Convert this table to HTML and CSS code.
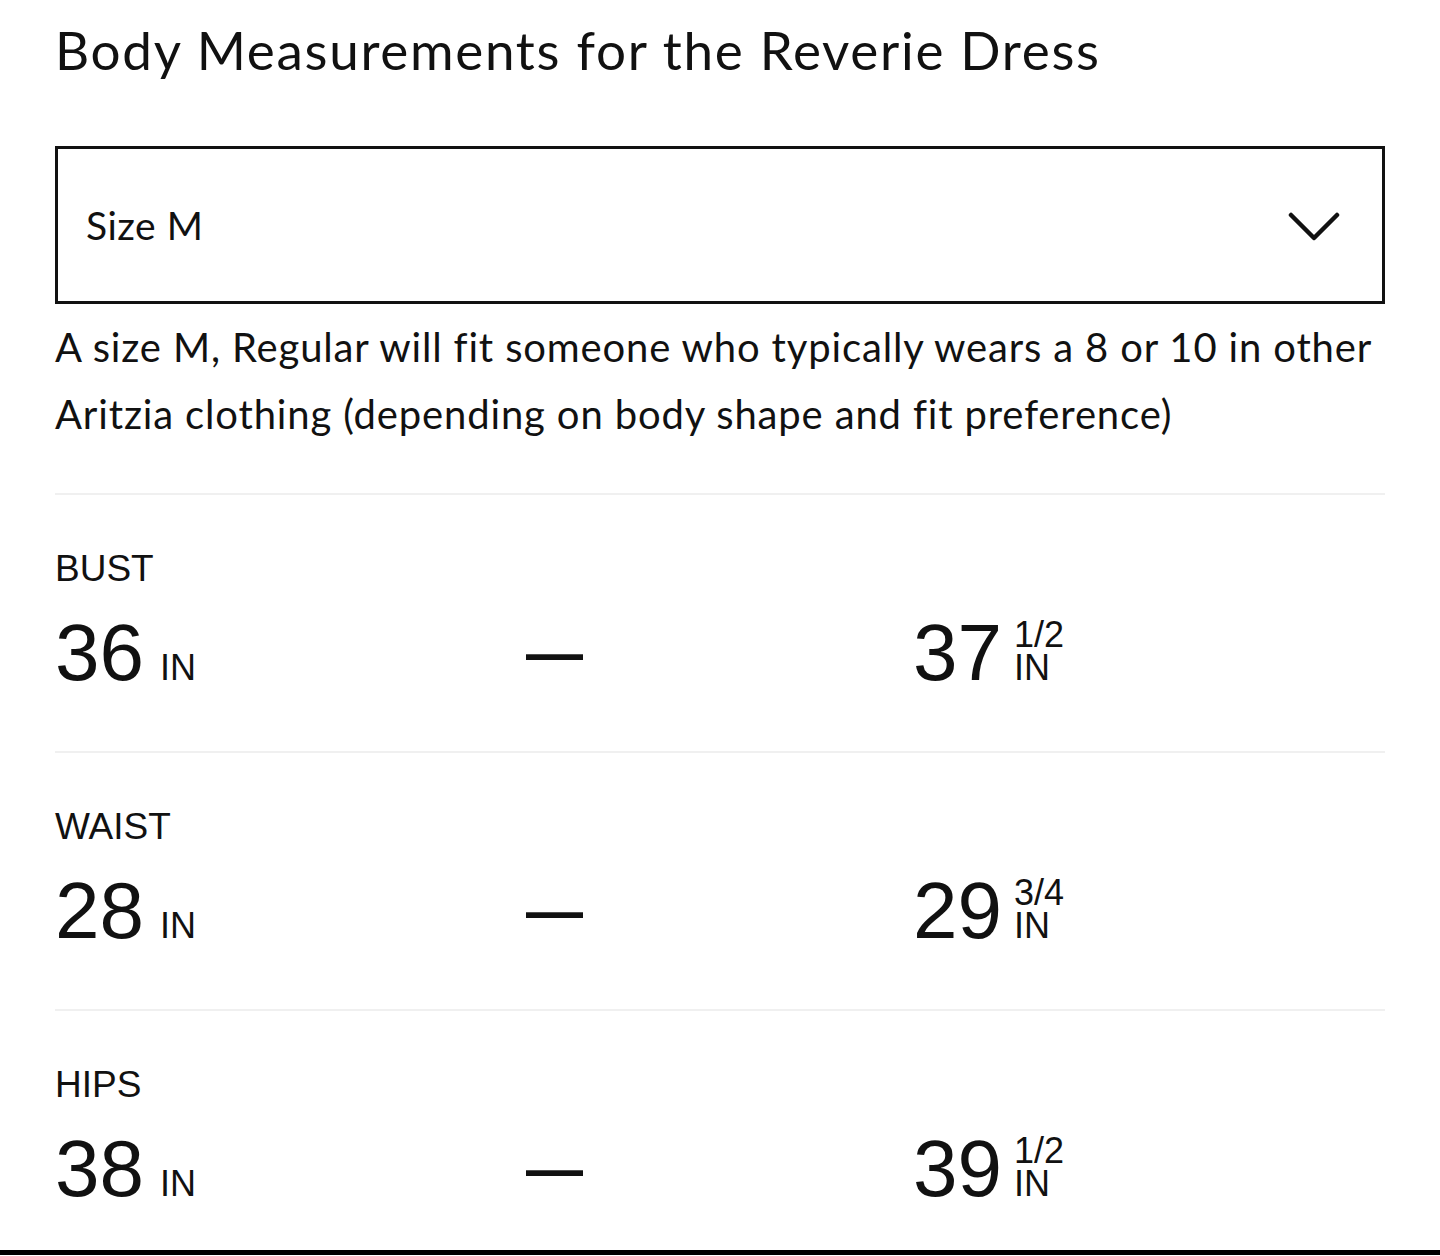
FILE: index.html
```html
<!DOCTYPE html>
<html lang="en">
<head>
<meta charset="utf-8">
<title>Body Measurements</title>
<link rel="stylesheet" href="styles.css">
</head>
<body>
<main class="sheet">
  <h1 class="title">Body Measurements for the Reverie Dress</h1>
  <div class="select">
    <span class="select-label">Size M</span>
    <svg class="chevron" width="52" height="32" viewBox="0 0 52 32" aria-hidden="true">
      <path d="M3 4 L26 27 L49 4" fill="none" stroke="#111" stroke-width="4.5" stroke-linecap="round" stroke-linejoin="round"/>
    </svg>
  </div>
  <p class="note">A size M, Regular will fit someone who typically wears a 8 or 10 in other Aritzia clothing (depending on body shape and fit preference)</p>

  <section class="row">
    <div class="label">BUST</div>
    <div class="values">
      <span class="val"><span class="num">36</span> <span class="unit">IN</span></span>
      <span class="dash">—</span>
      <span class="val"><span class="num">37</span> <span class="stack"><span class="frac">1/2</span><span class="unit-s">IN</span></span></span>
    </div>
  </section>

  <section class="row">
    <div class="label">WAIST</div>
    <div class="values">
      <span class="val"><span class="num">28</span> <span class="unit">IN</span></span>
      <span class="dash">—</span>
      <span class="val"><span class="num">29</span> <span class="stack"><span class="frac">3/4</span><span class="unit-s">IN</span></span></span>
    </div>
  </section>

  <section class="row row-last">
    <div class="label">HIPS</div>
    <div class="values">
      <span class="val"><span class="num">38</span> <span class="unit">IN</span></span>
      <span class="dash">—</span>
      <span class="val"><span class="num">39</span> <span class="stack"><span class="frac">1/2</span><span class="unit-s">IN</span></span></span>
    </div>
  </section>
</main>
<div class="edge"></div>
</body>
</html>
```
FILE: styles.css
```css
html, body {
  margin: 0;
  padding: 0;
  background: #ffffff;
}
body {
  color: #111111;
  font-family: Lato, "Noto Sans", sans-serif;
}
.sheet {
  padding: 0 55px;
}
.title {
  margin: 18px 0 0;
  font-family: Lato, "Noto Sans", sans-serif;
  font-weight: 400;
  font-size: 53px;
  line-height: 64px;
  letter-spacing: 1.7px;
}
.select {
  margin-top: 64px;
  height: 152px;
  border: 3px solid #111111;
  display: flex;
  align-items: center;
  justify-content: space-between;
  padding: 0 42px 0 28px;
}
.select-label {
  font-size: 39px;
  line-height: 1;
  letter-spacing: 0.5px;
}
.chevron {
  display: block;
  margin-top: 4px;
}
.note {
  margin: 10px 0 0;
  font-size: 40px;
  line-height: 67px;
  letter-spacing: 0.85px;
  padding-bottom: 45px;
  border-bottom: 2px solid #f0f0f0;
}
.row {
  padding: 53px 0 60px;
  border-bottom: 2px solid #f0f0f0;
  font-family: "Liberation Sans", Arial, sans-serif;
}
.row-last {
  border-bottom: none;
  padding-bottom: 43px;
}
.label {
  font-size: 37px;
  line-height: 41px;
}
.values {
  margin-top: 26px;
  display: flex;
  align-items: baseline;
  gap: 330px;
  height: 76px;
}
.val {
  white-space: nowrap;
  line-height: 76px;
  font-size: 36px;
}
.num {
  font-size: 80px;
}
.unit {
  font-size: 36px;
  margin-left: 6px;
}
.dash {
  font-size: 57px;
  line-height: 57px;
  font-weight: 700;
  align-self: center;
}
.stack {
  display: inline-block;
  vertical-align: baseline;
  font-size: 36px;
  line-height: 33px;
  margin-left: 2px;
}
.frac, .unit-s {
  display: block;
}
.edge {
  height: 5px;
  background: #000000;
}
```
